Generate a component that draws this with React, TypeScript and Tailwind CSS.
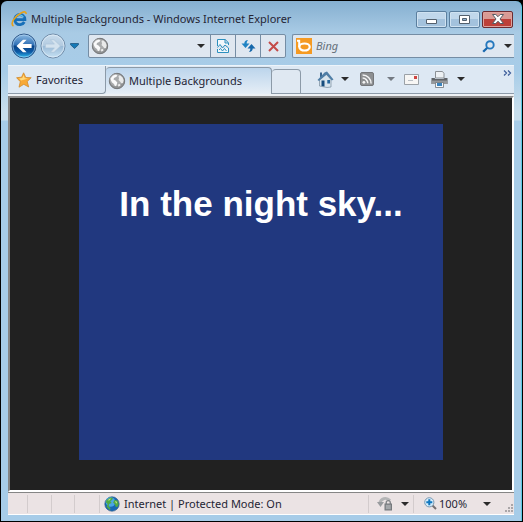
import type { ReactNode } from "react";

function IeLogo() {
  return (
    <svg width="16" height="16" viewBox="0 0 16 16" fill="none" aria-hidden="true">
      <path d="M13.3 11A5.1 5.1 0 1 1 13.900 8.600H5" stroke="#176fb8" strokeWidth="2.800" />
      <path d="M4.300 6.600A4.600 4.600 0 0 1 12.500 6.300" stroke="#62c6ef" strokeWidth="1.200" />
      <path d="M2.500 15C-1.500 12.800 4 4.700 10.500 1.700c3-1.400 4.800-.9 4.600 1.300" stroke="#e6a21b" strokeWidth="1.600" />
    </svg>
  );
}

function PageGlobe() {
  return (
    <svg width="18" height="18" viewBox="0 0 18 18" className="shrink-0" aria-hidden="true">
      <circle cx="9" cy="9" r="7.700" fill="#909293" stroke="#747678" strokeWidth="1" />
      <circle cx="8" cy="8" r="6.300" fill="#a9abac" />
      <path d="M2.500 6.500 5 3.500l3-1 1.500 1.200L8 5 6 6l-.5 1.500 2 1 1.800 2-.8 3-1.500.8-1-2.300-2-1.500L3 8.500z" fill="#fafafa" />
      <path d="m10.500 4 1.500-.8 2.500 2 1.200 3-.7 2.800-1.500.5-1.500-2-1.500-1.500L11 6.500z" fill="#e9eaea" />
      <path d="M9.800 12.500 12 12l.5 1.500-2 1.200z" fill="#f0f0f0" />
    </svg>
  );
}

function EarthGlobe() {
  return (
    <svg width="16" height="16" viewBox="0 0 16 16" aria-hidden="true">
      <circle cx="8" cy="8" r="7.200" fill="#1767b4" stroke="#35608c" strokeWidth="0.700" />
      <circle cx="6.500" cy="6" r="4.800" fill="#4aa6e4" />
      <path d="M2.200 4.500 6 1.500l3 .4L8 4 6.300 5.200 7.700 7 5 8 4.700 10.500 6.500 12 6 14.300 2.500 10.700 3.700 8 2 6.400zM10.500 4l3 .5 1.300 3.400-1.600 3.300-1.700-.7-.6-2.300-1.800-1.600z" fill="#52a944" />
      <path d="M3.600 4.200 6 2.500l1 .2-1.700 1.900zM11 5l1.500.4.6 1.700-1 .5z" fill="#c3e786" />
    </svg>
  );
}

function Caret({ className = "text-[#2b2b2b]" }: { className?: string }) {
  return (
    <svg width="8" height="4" viewBox="0 0 8 4" className={className} aria-hidden="true">
      <path d="M0 0h8L4 4z" fill="currentColor" />
    </svg>
  );
}

function BackIcon() {
  return (
    <svg width="26" height="26" viewBox="0 0 26 26" aria-hidden="true">
      <defs>
        <linearGradient id="back" x1="0" y1="0" x2="0" y2="1">
          <stop offset="0" stopColor="#8fbce4" />
          <stop offset=".46" stopColor="#2e6fb5" />
          <stop offset=".5" stopColor="#084387" />
          <stop offset=".75" stopColor="#0d5aa6" />
          <stop offset="1" stopColor="#32c2f4" />
        </linearGradient>
      </defs>
      <circle cx="13" cy="13" r="12" fill="url(#back)" stroke="#31598a" strokeWidth="1" />
      <circle cx="13" cy="13" r="11" fill="none" stroke="#b9dcf5" strokeOpacity=".55" />
      <path d="M5.500 13 12 6.700h3.600l-4 4.400h9v3.800h-9l4 4.400H12z" fill="#fff" />
    </svg>
  );
}

function ForwardIcon() {
  return (
    <svg width="26" height="26" viewBox="0 0 26 26" aria-hidden="true">
      <defs>
        <linearGradient id="forward" x1="0" y1="0" x2="0" y2="1">
          <stop offset="0" stopColor="#c9dced" />
          <stop offset=".48" stopColor="#b3cbe0" />
          <stop offset=".52" stopColor="#9bbbd7" />
          <stop offset="1" stopColor="#c7e2f4" />
        </linearGradient>
      </defs>
      <circle cx="13" cy="13" r="12" fill="url(#forward)" stroke="#718ca8" strokeWidth="1" />
      <circle cx="13" cy="13" r="11" fill="none" stroke="#e2eff9" strokeOpacity=".7" />
      <path d="M20.500 13 14 6.700h-3.600l4 4.400h-9v3.800h9l-4 4.400H14z" fill="#d3e2ee" stroke="#a8c1d6" strokeWidth=".6" />
    </svg>
  );
}

function CompatIcon() {
  return (
    <svg width="12" height="14" viewBox="0 0 12 14" fill="none" stroke="#2c8fbe" aria-hidden="true">
      <path d="M.5 7V.5h7.700l3.300 3.300V6M8 .5V4h3.500M.5 10v3.500h11V9" fill="#f2f8fb" />
      <path d="m.5 8.500 2.500-3 2.500 3.500 2.500-3 3.500 3M2 11l1.500-1.500L5.500 12l2-2.500L9.500 12" />
    </svg>
  );
}

function RefreshIcon() {
  return (
    <svg width="15" height="14" viewBox="0 0 15 14" aria-hidden="true">
      <path d="M7 1C4.800 1 3.300 2.200 3.300 4.500H.5L4.500 9l4-4.500H5.700C5.700 3 6 2.300 7 1z" fill="#1f83c3" />
      <path d="M8 13c2.200 0 3.700-1.200 3.700-3.500h2.800L10.500 5l-4 4.500h2.800C9.300 11 9 11.700 8 13z" fill="#1668ab" />
    </svg>
  );
}

function StopIcon() {
  return (
    <svg width="11" height="11" viewBox="0 0 11 11" aria-hidden="true">
      <path d="m1 1 9 9M10 1l-9 9" stroke="#c44b49" strokeWidth="2" />
    </svg>
  );
}

function BingIcon() {
  return (
    <svg width="16" height="16" viewBox="0 0 16 16" className="shrink-0" aria-hidden="true">
      <path d="M0 0h16v16H0z" fill="#f59a22" />
      <path d="M1 2.700h2.200V9" fill="none" stroke="#fff" strokeWidth="2" />
      <ellipse cx="8.500" cy="9" rx="5.200" ry="3.500" fill="none" stroke="#fff" strokeWidth="2.200" />
    </svg>
  );
}

function SearchIcon() {
  return (
    <svg width="13" height="13" viewBox="0 0 13 13" fill="none" aria-hidden="true">
      <path d="M5.500 7.500 1.200 11.800" stroke="#1767ad" strokeWidth="2.300" />
      <circle cx="8" cy="4.900" r="3.700" stroke="#2678bd" strokeWidth="1.900" />
    </svg>
  );
}

function StarIcon() {
  return (
    <svg width="16" height="16" viewBox="0 0 16 16" aria-hidden="true">
      <path d="m7.600.8 2.200 4.700 5.400.2-4 3.800 1.500 5.500-4.900-2.700L3 15.200l1.300-5.500-3.700-4 5-.5z" fill="#f8a935" stroke="#d08a2c" strokeWidth=".8" />
      <path d="m7.500 3 1.300 3.300 3.200.3-6.800 2L3 6.500l3.300-.4z" fill="#ffda7d" />
    </svg>
  );
}

function HomeIcon() {
  return (
    <svg width="17" height="17" viewBox="0 0 17 17" aria-hidden="true">
      <path d="M3 1.500h2V6H3z" fill="#38658f" />
      <path d="M2.500 8.500 9 3l5 5.500V16l-4 .5L2.500 15z" fill="#d8e4ed" stroke="#75899b" strokeWidth=".7" />
      <path d="M.5 9 7.500 1.500 10 .5 16.500 8.500l-1.700 1L9.500 3.800 2 10z" fill="#4f7ea6" />
      <path d="M4.500 9.500h3v6l-3-.6z" fill="#174c7d" />
      <path d="M10.300 9h2.700v3.500h-2.700z" fill="#26679d" />
    </svg>
  );
}

function FeedIcon() {
  return (
    <svg width="14" height="14" viewBox="0 0 14 14" aria-hidden="true">
      <rect x=".5" y=".5" width="13" height="13" rx="1.500" fill="#8d8f91" stroke="#75777a" />
      <circle cx="3.900" cy="10.300" r="1.400" fill="#f5f5f5" />
      <path d="M2.600 6.100a5.200 5.200 0 0 1 5.200 5.200M2.600 3a8.500 8.500 0 0 1 8.500 8.500" fill="none" stroke="#f5f5f5" strokeWidth="1.500" />
    </svg>
  );
}

function MailIcon() {
  return (
    <svg width="15" height="11" viewBox="0 0 15 11" aria-hidden="true">
      <path d="M.5.5h14v10H.5z" fill="#f7f6f4" stroke="#9ba1a6" />
      <path d="M10 2h3v3h-3z" fill="#cf4542" />
      <path d="M4 6.500h5" stroke="#b8bec4" />
    </svg>
  );
}

function PrinterIcon() {
  return (
    <svg width="17" height="17" viewBox="0 0 17 17" aria-hidden="true">
      <path d="M4.500.5h7l1.500 2V7H4.500z" fill="#edf1f4" stroke="#8b9095" />
      <path d="M.5 7h3l1 1h8l1-1h3v6H.5z" fill="#5f6367" />
      <path d="M.5 9.500h16V13H.5z" fill="#96999c" />
      <path d="M4.500 11.500h8v5h-8z" fill="#f6f7f8" stroke="#70757a" strokeWidth=".8" />
      <path d="M6 12h5v3H6z" fill="#3b83bc" />
    </svg>
  );
}

function LockIcon() {
  return (
    <svg width="17" height="15" viewBox="0 0 17 15" aria-hidden="true">
      <path d="M2.500 7.500C4 2.500 9 .5 13 4.500" fill="none" stroke="#b4b5b6" strokeWidth="2.800" />
      <path d="M0 6h7L3.500 11z" fill="#999c9f" />
      <path d="M9.200 8V6.700a2 2 0 0 1 4.100 0V8" fill="none" stroke="#7f8386" strokeWidth="1.300" />
      <rect x="8" y="8" width="6.500" height="6" fill="#8f9296" stroke="#75797c" />
      <path d="M9 10h4.500M9 12h4.500" stroke="#b8bbbd" />
    </svg>
  );
}

function ZoomIcon() {
  return (
    <svg width="13" height="13" viewBox="0 0 13 13" aria-hidden="true">
      <path d="m8.500 8.500 3.500 3.500" stroke="#756f70" strokeWidth="2" />
      <circle cx="5.300" cy="5.300" r="4.600" fill="#d6edfb" stroke="#7898b1" />
      <path d="M5.300 2.300v6M2.300 5.300h6" stroke="#1177bf" strokeWidth="2" />
    </svg>
  );
}

function ToolButton({ label, className, children }: { label: string; className: string; children: ReactNode }) {
  return (
    <button type="button" aria-label={label} className={`flex shrink-0 items-center justify-center ${className}`}>
      {children}
    </button>
  );
}

function TitleBar() {
  return (
    <header className="flex h-8 items-center pr-2 pl-2">
      <div className="mt-1 flex items-center gap-1 pl-0.5">
        <IeLogo />
        <h1 className="whitespace-nowrap">Multiple Backgrounds - Windows Internet Explorer</h1>
      </div>
      <div className="mt-1 ml-auto flex gap-0.5">
        <ToolButton label="Minimize" className="h-[17px] w-[31px] rounded-xs border border-[#5b7f9f] bg-linear-to-b from-[#c0d7eb] from-50% to-[#a3c2dd] to-50% shadow-[inset_0_0_0_1px_#cfe2f1]">
          <svg width="11" height="5" viewBox="0 0 11 5" className="mt-1"><path d="M.5.5h10v4H.5z" fill="#fff" stroke="#53606d" /></svg>
        </ToolButton>
        <ToolButton label="Maximize" className="h-[17px] w-[31px] rounded-xs border border-[#5b7f9f] bg-linear-to-b from-[#c0d7eb] from-50% to-[#a3c2dd] to-50% shadow-[inset_0_0_0_1px_#cfe2f1]">
          <svg width="11" height="9" viewBox="0 0 11 9"><path d="M.5.5h10v8H.5z" fill="#fff" stroke="#53606d" /><path d="M3.500 3.500h4v2h-4z" fill="#8cb0d0" stroke="#53606d" /></svg>
        </ToolButton>
        <ToolButton label="Close" className="h-[17px] w-[31px] rounded-xs border border-[#6b2b31] bg-linear-to-b from-[#d99a94] from-50% to-[#bd4039] to-50% shadow-[inset_0_0_0_1px_#dfa29d]">
          <svg width="12" height="10" viewBox="0 0 12 10"><path d="M.5.5h3.300L6 2.700 8.200.5h3.300L8 5l3.500 4.500H8.200L6 7.200 3.800 9.500H.5L4 5z" fill="#fff" stroke="#565c64" /></svg>
        </ToolButton>
      </div>
    </header>
  );
}

function NavigationBar() {
  return (
    <nav aria-label="Navigation" className="flex h-8 items-start">
      <div className="flex h-[26px] items-center gap-[3px] rounded-full pl-2.5">
        <ToolButton label="Back" className="size-[26px]"><BackIcon /></ToolButton>
        <ToolButton label="Forward" className="size-[26px]"><ForwardIcon /></ToolButton>
      </div>
      <ToolButton label="Recent pages" className="ml-0.5 h-[26px] w-3">
        <svg width="9" height="6" viewBox="0 0 9 6"><path d="M.5.5h8v1.200L4.500 5.500l-4-3.800z" fill="#1579b6" stroke="#174c75" strokeWidth=".7" /></svg>
      </ToolButton>
      <div className="mt-px ml-2 flex h-6 w-[198px] shrink-0 items-stretch rounded-xs border border-[#758da4] bg-[#dfe7f0]">
        <label htmlFor="address" className="flex items-center pl-0.5"><PageGlobe /></label>
        <input id="address" type="text" aria-label="Address" className="w-0 min-w-0 flex-1 bg-transparent px-1 outline-none" />
        <ToolButton label="Show addresses" className="w-[18px]"><Caret /></ToolButton>
        <ToolButton label="Compatibility view" className="w-[25px] border-l border-[#758da4]"><CompatIcon /></ToolButton>
        <ToolButton label="Refresh" className="w-[25px] border-l border-[#758da4]"><RefreshIcon /></ToolButton>
        <ToolButton label="Stop" className="w-[25px] border-l border-[#758da4]"><StopIcon /></ToolButton>
      </div>
      <div className="mt-px mr-[7px] ml-1.5 flex h-6 min-w-0 flex-1 items-center rounded-l-xs border-y border-l border-[#758da4] bg-[#dfe7f0] pl-[3px]">
        <BingIcon />
        <input type="search" aria-label="Search with Bing" placeholder="Bing" className="ml-1 w-0 min-w-0 flex-1 bg-transparent italic outline-none placeholder:text-[#66707a]" />
        <ToolButton label="Search" className="h-5 w-5"><SearchIcon /></ToolButton>
        <ToolButton label="Search options" className="ml-1 h-5 w-3"><Caret /></ToolButton>
      </div>
    </nav>
  );
}

function TabBar() {
  return (
    <div className="mx-[7px] flex h-[29px] border-t border-[#edf4fa] bg-[#dde8f3]">
      <button type="button" className="flex w-[98px] shrink-0 items-center gap-1 rounded-br-sm border-r border-b border-[#8c9aa8] pl-2">
        <StarIcon />
        Favorites
      </button>
      <div role="tablist" className="flex items-end">
        <button type="button" role="tab" aria-selected="true" className="flex h-[27px] w-[166px] items-center gap-[3px] rounded-t-sm border-t border-r border-[#8c9aa8] bg-linear-to-b from-[#bcd5ec] to-[#e6eef6] pl-0.5 whitespace-nowrap">
          <PageGlobe />
          Multiple Backgrounds
        </button>
        <button type="button" role="tab" aria-selected="false" aria-label="New tab" className="h-[25px] w-[29px] rounded-t-sm border-t border-r border-b border-[#8c9aa8] bg-[#dfe8f2]" />
      </div>
      <div className="flex flex-1 items-start border-b border-[#8c9aa8] pt-px">
        <ToolButton label="Home" className="ml-3.5 h-6 w-5"><HomeIcon /></ToolButton>
        <ToolButton label="Home options" className="ml-1 h-6 w-3"><Caret /></ToolButton>
        <ToolButton label="Feeds" className="ml-1.5 h-6 w-5"><FeedIcon /></ToolButton>
        <ToolButton label="Feed options" className="ml-2 h-6 w-3"><Caret className="text-[#747a82]" /></ToolButton>
        <ToolButton label="Read mail" className="ml-1 h-6 w-5"><MailIcon /></ToolButton>
        <ToolButton label="Print" className="ml-2 h-6 w-5"><PrinterIcon /></ToolButton>
        <ToolButton label="Print options" className="ml-1.5 h-6 w-3"><Caret /></ToolButton>
        <ToolButton label="More tools" className="mr-px ml-auto h-3 w-3">
          <svg width="9" height="6" viewBox="0 0 9 6" fill="none" stroke="#3f5f9b" strokeWidth="1.300"><path d="m1 .5 2.500 2.500L1 5.500m4-5L7.500 3 5 5.500" /></svg>
        </ToolButton>
      </div>
    </div>
  );
}

function StatusBar() {
  return (
    <footer className="mx-[7px] flex h-[23px] shrink-0 items-center border-t border-b border-t-[#858585] border-b-white bg-[#ebe3e4]">
      <div className="flex h-4.5 w-[92px] divide-x divide-[#d3cccd] border-r border-[#d3cccd]">
        <span className="w-5" />
        <span className="w-6" />
        <span className="w-6" />
        <span className="w-6" />
      </div>
      <p className="flex items-center gap-1 pl-1 whitespace-nowrap">
        <EarthGlobe />
        Internet | Protected Mode: On
      </p>
      <div className="ml-auto flex h-4.5 w-[45px] items-center border-l border-[#d3cccd]">
        <ToolButton label="Privacy lock" className="ml-1.5 h-4 w-5"><LockIcon /></ToolButton>
        <ToolButton label="Lock options" className="ml-1 h-4 w-3"><Caret /></ToolButton>
      </div>
      <div className="flex h-4.5 w-[101px] items-center border-l border-[#d3cccd]">
        <button type="button" className="ml-2.5 flex items-center gap-0.5"><ZoomIcon />100%</button>
        <ToolButton label="Zoom options" className="ml-auto h-4 w-3"><Caret /></ToolButton>
        <svg width="9" height="9" viewBox="0 0 9 9" className="ml-3 self-end" fill="#aaa6a8" aria-hidden="true">
          <path d="M6 0h2v2H6zM3 3h2v2H3zm3 0h2v2H6zM0 6h2v2H0zm3 0h2v2H3zm3 0h2v2H6z" />
        </svg>
      </div>
    </footer>
  );
}

export default function App() {
  return (
    <div className="flex min-h-screen bg-black p-px font-['Noto_Sans','Open_Sans',sans-serif] text-[11px] leading-4 text-[#252535]">
      <div className="flex min-w-0 flex-1 flex-col rounded-t-md border-r border-[#5bc9e3] bg-linear-[to_bottom,#85afd0_0,#a9cbe5_32px,#a7cce8_70px,#c8deec_110px,#c8deec_119px,#a7cce8_120px] pb-1.5">
        <TitleBar />
        <NavigationBar />
        <TabBar />
        <div className="mx-[7px] flex flex-1 flex-col border-t-2 border-[#eef1f4]">
          <main className="flex flex-1 flex-col border-2 border-t-[#8c8c8c] border-r-white border-b-white border-l-[#858585] bg-[#212121] px-[69px] pt-[26px] pb-[30px]">
            <section className="flex-1 bg-[#21387f] pt-[60px] text-center font-['Liberation_Sans',Arial,sans-serif]">
              <h2 className="text-[35px] leading-10 font-bold whitespace-nowrap text-white">In the night sky...</h2>
            </section>
          </main>
        </div>
        <StatusBar />
      </div>
    </div>
  );
}
